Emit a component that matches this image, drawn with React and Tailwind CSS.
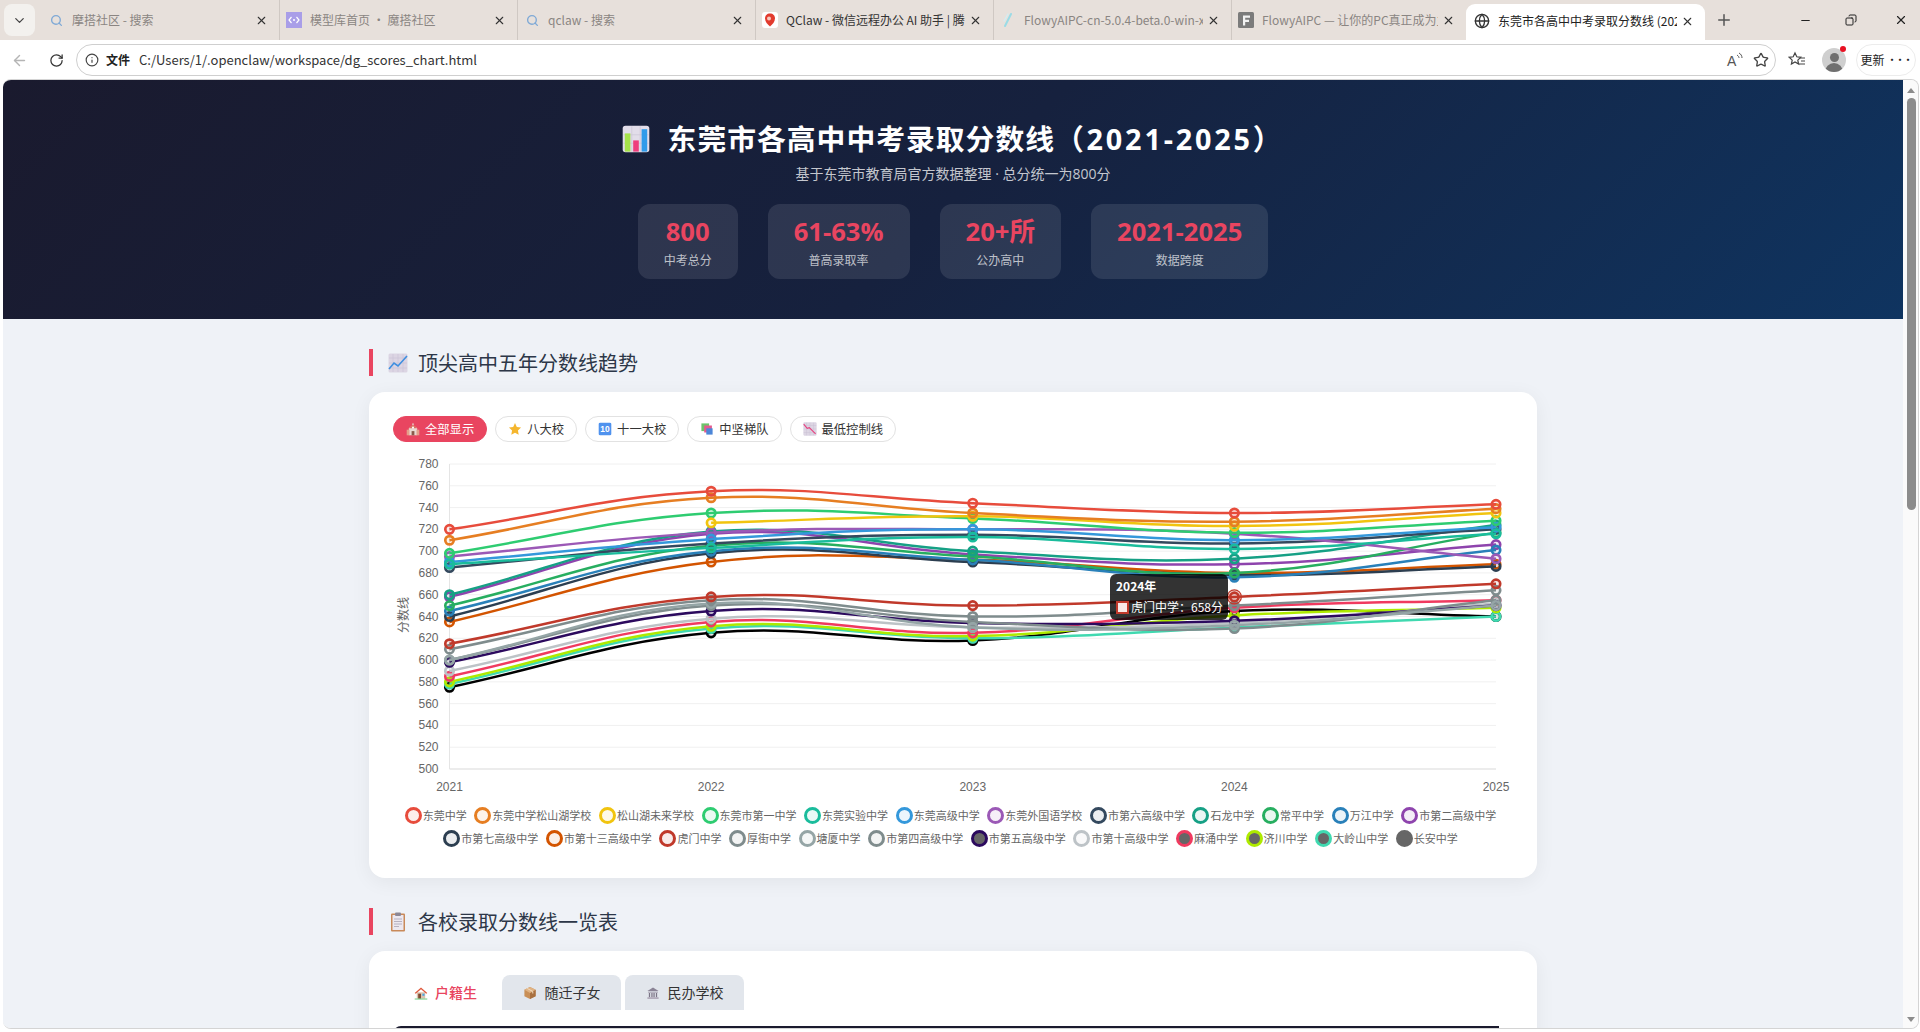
import React from "react";
import { ArrowLeft, ChevronDown, Copy, Globe, Info, Minus, Plus, RotateCw, Search, Star, X } from "lucide-react";

const CJK = "font-['Noto_Sans_CJK_SC','Noto_Sans',sans-serif]";
const LATIN_FIRST = "font-['Open_Sans','Noto_Sans_CJK_SC',sans-serif]";

const seriesList = [
  { name: "东莞中学", color: "#e74c3c", v: [720, 755, 744, 735, 743] },
  { name: "东莞中学松山湖学校", color: "#e67e22", v: [710, 749, 735, 727, 739] },
  { name: "松山湖未来学校", color: "#f1c40f", v: [null, 726, 732, 723, 735] },
  { name: "东莞市第一中学", color: "#2ecc71", v: [698, 735, 730, 717, 728] },
  { name: "东莞实验中学", color: "#1abc9c", v: [688, 703, 713, 702, 716] },
  { name: "东莞高级中学", color: "#3498db", v: [690, 711, 720, 710, 722] },
  { name: "东莞外国语学校", color: "#9b59b6", v: [695, 717, 720, 716, 693] },
  { name: "市第六高级中学", color: "#34495e", v: [685, 707, 715, 707, 720] },
  { name: "石龙中学", color: "#16a085", v: [660, 718, 700, 693, 724] },
  { name: "常平中学", color: "#27ae60", v: [650, 705, 695, 680, 717] },
  { name: "万江中学", color: "#2980b9", v: [645, 700, 692, 676, 701] },
  { name: "市第二高级中学", color: "#8e44ad", v: [658, 716, 697, 688, 706] },
  { name: "市第七高级中学", color: "#2c3e50", v: [640, 698, 690, 678, 686] },
  { name: "市第十三高级中学", color: "#d35400", v: [635, 690, 692, 680, 688] },
  { name: "虎门中学", color: "#c0392b", v: [615, 658, 650, 658, 670] },
  { name: "厚街中学", color: "#7f8c8d", v: [610, 655, 640, 650, 664] },
  { name: "塘厦中学", color: "#95a5a6", v: [600, 652, 630, 632, 650] },
  { name: "市第四高级中学", color: "#7f8c8d", v: [600, 650, 635, 629, 655] },
  { name: "市第五高级中学", color: "#2c0a5e", v: [598, 645, 634, 636, 650], legendFill: "#666666" },
  { name: "市第十高级中学", color: "#bdc3c7", v: [590, 638, 630, 634, 652] },
  { name: "麻涌中学", color: "#f03a5f", v: [585, 635, 625, 648, 655], legendFill: "#666666" },
  { name: "济川中学", color: "#aeea00", v: [580, 631, 622, 641, 648], legendFill: "#666666" },
  { name: "大岭山中学", color: "#40d9b0", v: [578, 629, 620, 630, 640], legendFill: "#666666" },
  { name: "长安中学", color: "#000000", v: [575, 625, 618, 645, 640], legendFill: "#666666", legendBorder: "#666666" },
];

// plot area, relative to the svg
const plot = { left: 56.5, right: 1103, top: 12, bottom: 317 };
const years = [2021, 2022, 2023, 2024, 2025];
const ticks = [780, 760, 740, 720, 700, 680, 660, 640, 620, 600, 580, 560, 540, 520, 500];
const xAt = (i) => plot.left + (i * (plot.right - plot.left)) / 4;
const yAt = (v) => plot.bottom - ((v - 500) / 280) * (plot.bottom - plot.top);

// same spline as chart.js with tension 0.4
function linePath(values) {
  const pts = values
    .map((v, i) => (v === null ? null : { x: xAt(i), y: yAt(v) }))
    .filter(Boolean);
  const t = 0.4;
  const ctrl = pts.map((p, i) => {
    const prev = pts[i - 1] || p;
    const next = pts[i + 1] || p;
    const d01 = Math.hypot(p.x - prev.x, p.y - prev.y);
    const d12 = Math.hypot(next.x - p.x, next.y - p.y);
    const total = d01 + d12 || 1;
    const fa = (t * d01) / total;
    const fb = (t * d12) / total;
    return {
      px: p.x - fa * (next.x - prev.x),
      py: p.y - fa * (next.y - prev.y),
      nx: p.x + fb * (next.x - prev.x),
      ny: p.y + fb * (next.y - prev.y),
    };
  });
  let d = `M${pts[0].x} ${pts[0].y}`;
  for (let i = 1; i < pts.length; i++) {
    d += `C${ctrl[i - 1].nx} ${ctrl[i - 1].ny} ${ctrl[i].px} ${ctrl[i].py} ${pts[i].x} ${pts[i].y}`;
  }
  return d;
}

const Emoji = ({ children, size = 16, className = "" }) => (
  <svg width={size} height={size} viewBox="0 0 20 20" className={`shrink-0 ${className}`}>
    {children}
  </svg>
);

const BarsEmoji = ({ size }) => (
  <Emoji size={size}>
    <rect x="0.5" y="0.5" width="19" height="19" rx="2" fill="#e2dde9" />
    <path d="M7 1v18M13 1v18M1 7h18M1 13h18" stroke="#cbc4d6" strokeWidth="0.5" />
    <rect x="2" y="6" width="4" height="13" fill="#a6e34a" />
    <rect x="8" y="11" width="4" height="8" fill="#ee3d7c" />
    <rect x="14" y="3" width="4" height="16" fill="#2f9bea" />
  </Emoji>
);

const LineUpEmoji = ({ size }) => (
  <Emoji size={size}>
    <rect x="0.5" y="0.5" width="19" height="19" rx="1.5" fill="#dcd5e3" />
    <path d="M5 1v18M10 1v18M15 1v18M1 5h18M1 10h18M1 15h18" stroke="#c5bcd0" strokeWidth="0.5" />
    <path d="M1 16L6 10l4 3 9-10" fill="none" stroke="#3f8fe0" strokeWidth="1.6" />
  </Emoji>
);

const LineDownEmoji = ({ size }) => (
  <Emoji size={size}>
    <rect x="0.5" y="0.5" width="19" height="19" rx="1.5" fill="#dcd5e3" />
    <path d="M5 1v18M10 1v18M15 1v18M1 5h18M1 10h18M1 15h18" stroke="#c5bcd0" strokeWidth="0.5" />
    <path d="M1 3l5 6 3-1 9 9" fill="none" stroke="#e8407e" strokeWidth="1.6" />
  </Emoji>
);

const ClipboardEmoji = ({ size }) => (
  <Emoji size={size}>
    <rect x="3" y="1.5" width="14" height="18" rx="1" fill="#c98a5a" />
    <rect x="4.5" y="3" width="11" height="15" fill="#ece8f0" />
    <path d="M6 7h8M6 9.5h8M6 12h8M6 14.5h5" stroke="#a9a3b5" strokeWidth="0.8" />
    <rect x="7" y="0.5" width="6" height="3.5" rx="1" fill="#8c8795" />
  </Emoji>
);

const SchoolEmoji = ({ size }) => (
  <Emoji size={size}>
    <path d="M10 1l1 2v2l5 4v10H4V9l5-4V3z" fill="#e9d9d2" />
    <path d="M4 9l6-5 6 5" fill="#d9705c" />
    <rect x="1" y="11" width="4" height="8" fill="#e59f8a" />
    <rect x="15" y="11" width="4" height="8" fill="#e59f8a" />
    <rect x="8" y="13" width="4" height="6" fill="#8a5a4a" />
    <circle cx="10" cy="8" r="1.5" fill="#fff" />
  </Emoji>
);

const StarEmoji = ({ size }) => (
  <Emoji size={size}>
    <path d="M10 1.5l2.6 5.6 6 .8-4.4 4.2 1.1 6L10 15.2l-5.3 2.9 1.1-6L1.4 7.9l6-.8z" fill="#f5b62e" />
  </Emoji>
);

const KeycapEmoji = ({ size }) => (
  <Emoji size={size}>
    <rect x="1" y="1" width="18" height="18" rx="2" fill="#4f92ee" />
    <text x="10" y="14.5" textAnchor="middle" fontSize="12" fontWeight="700" fill="#fff" fontFamily="Liberation Sans, sans-serif">10</text>
  </Emoji>
);

const BooksEmoji = ({ size }) => (
  <Emoji size={size}>
    <rect x="2" y="2" width="11" height="11" fill="#6cc36a" />
    <rect x="6" y="5" width="11" height="10" fill="#e35a8e" />
    <rect x="9" y="9" width="9" height="9" fill="#4c86d8" />
  </Emoji>
);

const HouseEmoji = ({ size }) => (
  <Emoji size={size}>
    <rect x="4" y="9" width="12" height="9" fill="#d9c3ae" />
    <path d="M1 10L10 2l9 8-1.5 1L10 4.5 2.5 11z" fill="#e0593c" />
    <rect x="6" y="11" width="4" height="7" fill="#7d4a32" />
    <rect x="12" y="11" width="3" height="3" fill="#45a7e6" />
    <rect x="1" y="18" width="18" height="1.2" fill="#53c26a" />
  </Emoji>
);

const BoxEmoji = ({ size }) => (
  <Emoji size={size}>
    <path d="M10 1.5l8 4v9l-8 4-8-4v-9z" fill="#c98f56" />
    <path d="M10 10v8.5l8-4v-9z" fill="#a87040" />
    <path d="M2 5.5l8 4.5 8-4.5-8-4z" fill="#e0b282" />
    <path d="M6 3.5l8 4.3v3" fill="none" stroke="#f1dcc0" strokeWidth="1.4" />
  </Emoji>
);

const BankEmoji = ({ size }) => (
  <Emoji size={size}>
    <path d="M10 2l8 5H2z" fill="#8b8496" />
    <rect x="3" y="8" width="14" height="1.5" fill="#a49dae" />
    <path d="M5 10v6M8.5 10v6M11.5 10v6M15 10v6" stroke="#7b7486" strokeWidth="1.8" />
    <rect x="2" y="16" width="16" height="2.5" fill="#b1aaba" />
  </Emoji>
);

const browserTabs = [
  { title: "摩搭社区 - 搜索", icon: <Search size={13} className="text-[#7fa9d6]" strokeWidth={2.5} /> },
  {
    title: "模型库首页 · 魔搭社区",
    icon: (
      <svg width="16" height="16" viewBox="0 0 16 16">
        <rect width="16" height="16" fill="#a99ee8" />
        <path d="M5.5 5L3 8l2.5 3M10.5 5L13 8l-2.5 3" fill="none" stroke="#fff" strokeWidth="1.2" />
        <circle cx="8" cy="8" r="1" fill="#fff" />
      </svg>
    ),
  },
  { title: "qclaw - 搜索", icon: <Search size={13} className="text-[#7fa9d6]" strokeWidth={2.5} /> },
  {
    title: "QClaw - 微信远程办公 AI 助手 | 腾讯",
    dark: true,
    icon: (
      <svg width="16" height="16" viewBox="0 0 16 16">
        <rect width="16" height="16" rx="3" fill="#fff" />
        <path d="M8 1.5c3 0 5 2 5 5 0 3-2.5 6-5 8-2.5-2-5-5-5-8 0-3 2-5 5-5z" fill="#e23b2e" />
        <circle cx="7" cy="6.5" r="2" fill="#f7c9bf" />
      </svg>
    ),
  },
  {
    title: "FlowyAIPC-cn-5.0.4-beta.0-win-x64",
    icon: (
      <svg width="16" height="16" viewBox="0 0 16 16">
        <path d="M5 14L11 2" stroke="#9adbe6" strokeWidth="2" strokeLinecap="round" />
        <path d="M4 9L8 2" stroke="#d2eef3" strokeWidth="1.2" strokeLinecap="round" />
      </svg>
    ),
  },
  {
    title: "FlowyAIPC — 让你的PC真正成为主",
    icon: (
      <svg width="16" height="16" viewBox="0 0 16 16">
        <rect width="16" height="16" rx="1.5" fill="#7b7b7b" />
        <path d="M5 3.5h7v2.2H7.2v2H11v2.2H7.2v3.6H5z" fill="#f2f2f2" />
      </svg>
    ),
  },
];

const stats = [
  { value: "800", label: "中考总分" },
  { value: "61-63%", label: "普高录取率" },
  { value: "20+所", label: "公办高中" },
  { value: "2021-2025", label: "数据跨度" },
];

const filters = [
  { label: "全部显示", Icon: SchoolEmoji, active: true },
  { label: "八大校", Icon: StarEmoji },
  { label: "十一大校", Icon: KeycapEmoji },
  { label: "中坚梯队", Icon: BooksEmoji },
  { label: "最低控制线", Icon: LineDownEmoji },
];

const SectionTitle = ({ Icon, children }) => (
  <div className="mb-4 flex h-[27px] items-center border-l-4 border-[#e94560] pl-[15px] text-[20px] leading-[27px] text-[#2d3748]">
    <Icon size={20} />
    <span className="ml-[10px]">{children}</span>
  </div>
);

const Chart = () => (
  <div className="relative mt-[10px]">
    <svg width="1120" height="350" className="block">
      {ticks.map((t) => (
        <line key={t} x1={plot.left} x2={plot.right} y1={yAt(t)} y2={yAt(t)} stroke={t === 500 ? "#d9d9d9" : "#f0f0f0"} strokeWidth="1" />
      ))}
      <line x1={plot.left} x2={plot.left} y1={plot.top} y2={plot.bottom} stroke="#e5e5e5" strokeWidth="1" />
      {ticks.map((t) => (
        <text key={t} x={plot.left - 11} y={yAt(t) + 4} textAnchor="end" fontSize="12" fill="#666" fontFamily="Liberation Sans, sans-serif">
          {t}
        </text>
      ))}
      {years.map((y, i) => (
        <text key={y} x={xAt(i)} y="339" textAnchor="middle" fontSize="12" fill="#666" fontFamily="Liberation Sans, sans-serif">
          {y}
        </text>
      ))}
      <text
        transform="translate(15 163) rotate(-90)"
        textAnchor="middle"
        fontSize="12"
        fill="#666"
        fontFamily="Noto Sans CJK SC, sans-serif"
      >
        分数线
      </text>
      {[...seriesList].reverse().map((s) => (
        <g key={s.name}>
          <path d={linePath(s.v)} fill="none" stroke={s.color} strokeWidth="2.5" />
          {s.v.map((v, i) =>
            v === null ? null : (
              <circle key={i} cx={xAt(i)} cy={yAt(v)} r="4.2" fill={`${s.color}18`} stroke={s.color} strokeWidth="2.7" />
            )
          )}
        </g>
      ))}
      <circle cx={xAt(3)} cy={yAt(658)} r="7" fill="#c0392b30" stroke="#c0392b" strokeWidth="1.2" />
    </svg>
    <div className="absolute left-[717px] top-[122px] h-[46px] w-[118px] rounded-[6px] bg-black/80 pl-[6px] pt-[3px] text-[12px] leading-[18px] text-white">
      <div className="font-bold">2024年</div>
      <div className="mt-[3px] flex items-center">
        <span className="mr-[2px] h-[13px] w-[13px] border-2 border-[#c0392b] bg-[#f9e9e7]" />
        虎门中学：658分
      </div>
    </div>
  </div>
);

const LegendRow = ({ items }) => (
  <div className="flex h-[23px] items-center justify-center gap-[7.6px] pr-[5px] text-[11px] text-[#666666]">
    {items.map((s) => (
      <div key={s.name} className="flex items-center">
        <span
          className="h-[17px] w-[17px] rounded-full border-[3px]"
          style={{
            borderColor: s.legendBorder || s.color,
            backgroundColor: s.legendFill || `${s.color}18`,
          }}
        />
        <span className="ml-[1px] whitespace-nowrap">{s.name}</span>
      </div>
    ))}
  </div>
);

export default function App() {
  return (
    <div className={`flex h-screen w-full flex-col overflow-hidden bg-white ${CJK}`}>
      {/* tab strip */}
      <div className="flex h-10 shrink-0 items-end bg-[#e7e0db]">
        <div className="mb-1 ml-1 mr-[7px] flex h-8 w-[31px] items-center justify-center rounded-lg bg-[#f3f1ee]">
          <ChevronDown size={15} className="text-[#444]" />
        </div>
        <div className="flex h-full">
          {browserTabs.map((tab, i) => (
            <div key={i} className={`flex h-full items-center border-r border-[#cfc8c3] pl-[6px] pr-[11px] ${i === 5 ? "w-[234px] border-r-0" : "w-[238px]"}`}>
              <span className="flex w-4 shrink-0 items-center justify-center">{tab.icon}</span>
              <span className={`ml-2 flex-1 overflow-hidden whitespace-nowrap text-[12px] ${tab.dark ? "text-[#333]" : "text-[#8a8582]"}`}>
                {tab.title}
              </span>
              <X size={13} className="ml-1 shrink-0 text-[#333]" />
            </div>
          ))}
        </div>
        <div className="flex h-9 w-[239px] items-center rounded-t-[9px] bg-white pb-[2px] pl-2 pr-[11px]">
          <Globe size={16} className="shrink-0 text-[#333]" />
          <span className="ml-2 flex-1 overflow-hidden whitespace-nowrap text-[12px] text-[#222]">东莞市各高中中考录取分数线 (2021-2025)</span>
          <X size={13} className="ml-1 shrink-0 text-[#333]" />
        </div>
        <div className="flex h-full flex-1 items-center">
          <Plus size={18} className="ml-[10px] text-[#555]" />
          <div className="ml-auto flex items-center">
            <Minus size={13} className="mr-[33px] text-[#222]" />
            <Copy size={12} className="mr-[37px] -scale-x-100 text-[#222]" />
            <X size={14} className="mr-[12px] text-[#222]" />
          </div>
        </div>
      </div>

      {/* toolbar */}
      <div className="flex h-10 shrink-0 items-center">
        <ArrowLeft size={17} className="ml-[11px] text-[#b5b5b5]" />
        <RotateCw size={15} className="ml-[21px] text-[#333]" />
        <div className="ml-[12px] flex h-8 w-[1700px] items-center rounded-full border border-[#cfcfcf] pl-[8px] pr-[6px]">
          <Info size={14} className="text-[#444]" />
          <span className="ml-[7px] text-[12px] font-bold text-[#222]">文件</span>
          <span className="ml-[9px] text-[13px] text-[#333]">C:/Users/1/.openclaw/workspace/dg_scores_chart.html</span>
          <div className="ml-auto flex items-center">
            <svg width="18" height="16" viewBox="0 0 18 16" className="mr-[9px]">
              <text x="1" y="14" fontSize="14" fill="#555" fontFamily="Liberation Sans, sans-serif">A</text>
              <path d="M11 3c1.5 1 2 2 2 3M13 1c2 1 3 3 3 5" fill="none" stroke="#555" strokeWidth="1" />
            </svg>
            <Star size={16} className="text-[#444]" />
          </div>
        </div>
        <svg width="18" height="18" viewBox="0 0 18 18" className="ml-[12px]">
          <path d="M7 2l1.8 3.8 4 .5-3 2.8.8 4L7 11l-3.6 2.1.8-4-3-2.8 4-.5z" fill="none" stroke="#444" strokeWidth="1.2" />
          <path d="M12 7h5M13 10h4M11 13h6" stroke="#444" strokeWidth="1.2" />
        </svg>
        <div className="relative ml-[16px]">
          <div className="flex h-[24px] w-[24px] flex-col items-center justify-end overflow-hidden rounded-full bg-[#cfcfcf]">
            <span className="h-[9px] w-[9px] rounded-full bg-[#6f6f6f]" />
            <span className="mt-[1px] h-[9px] w-[18px] rounded-t-full bg-[#6f6f6f]" />
          </div>
          <span className="absolute right-0 top-[-2px] h-[6px] w-[6px] rounded-full bg-[#e81123]" />
        </div>
        <div className="ml-[10px] flex h-8 w-[60px] items-center justify-center whitespace-nowrap rounded-full border border-[#ececec] text-[12px] text-[#222]">
          更新<span className="ml-[3px] text-[9px] font-bold tracking-[-1px]">···</span>
        </div>
      </div>

      {/* page */}
      <div className="mb-[3px] ml-[3px] mr-[1px] -mt-px flex min-h-0 flex-1 overflow-hidden rounded-lg border border-[#d4d4d4] border-l-0 bg-[#fafafa]">
        <div className="min-w-0 flex-1 overflow-hidden bg-[#eff2f7]">
          <header className="flex h-[239px] flex-col items-center bg-[linear-gradient(135deg,#1a1a2e_0%,#16213e_50%,#0f3460_100%)] pt-[38px] text-white">
            <h1 className="flex items-center text-[28.8px] font-bold leading-[40px] tracking-[1px]">
              <BarsEmoji size={28} />
              <span className="ml-[18px]">
                东莞市各高中中考录取分数线<span className={`${LATIN_FIRST} tracking-[2.8px]`}>（2021-2025）</span>
              </span>
            </h1>
            <p className={`mt-[4px] text-[14px] leading-[22px] text-white/75 ${LATIN_FIRST}`}>基于东莞市教育局官方数据整理 · 总分统一为800分</p>
            <div className="mt-[19px] flex gap-[30px]">
              {stats.map((s) => (
                <div key={s.label} className="flex h-[75px] flex-col items-center rounded-xl bg-white/10 px-[26px] pt-[11px]">
                  <div className={`whitespace-nowrap text-[25.6px] font-bold leading-[34px] text-[#e94560] ${LATIN_FIRST}`}>{s.value}</div>
                  <div className="mt-[2px] text-[12px] leading-[18px] text-white/70">{s.label}</div>
                </div>
              ))}
            </div>
          </header>

          <main className="mx-auto max-w-[1200px] px-4 pt-[30px]">
            <SectionTitle Icon={LineUpEmoji}>顶尖高中五年分数线趋势</SectionTitle>
            <section className="mb-[30px] h-[486px] rounded-2xl bg-white p-6 shadow-[0_4px_20px_rgba(0,0,0,0.06)]">
              <div className="flex gap-2">
                {filters.map(({ label, Icon, active }) => (
                  <button
                    key={label}
                    className={`flex h-[26px] items-center gap-[5px] rounded-full border px-[12px] text-[12.3px] ${
                      active ? "border-[#e94560] bg-[#e94560] text-white" : "border-[#e2e2e2] bg-white text-[#333]"
                    }`}
                  >
                    <Icon size={14} />
                    {label}
                  </button>
                ))}
              </div>
              <Chart />
              <div className="mt-[2px]">
                <LegendRow items={seriesList.slice(0, 12)} />
                <LegendRow items={seriesList.slice(12)} />
              </div>
            </section>

            <SectionTitle Icon={ClipboardEmoji}>各校录取分数线一览表</SectionTitle>
            <section className="rounded-2xl bg-white p-6 shadow-[0_4px_20px_rgba(0,0,0,0.06)]">
              <div className="flex h-[35px] gap-1 text-[14px] text-[#333]">
                <div className="flex w-[105px] items-center justify-center gap-[7px] font-medium text-[#e94560]">
                  <HouseEmoji size={14} />
                  户籍生
                </div>
                <div className="flex w-[119px] items-center justify-center gap-[8px] rounded-t-lg bg-[#e2e6ec]">
                  <BoxEmoji size={14} />
                  随迁子女
                </div>
                <div className="flex w-[119px] items-center justify-center gap-[8px] rounded-t-lg bg-[#e2e6ec]">
                  <BankEmoji size={14} />
                  民办学校
                </div>
              </div>
              <div className="mt-4 h-10 w-[1106px] rounded-tl-lg bg-[#1a1a2e]" />
            </section>
          </main>
        </div>

        {/* scrollbar */}
        <div className="flex w-[15px] shrink-0 flex-col items-center bg-[#fafafa]">
          <div className="ml-[1px] mt-[8px] h-0 w-0 border-x-[4px] border-b-[5px] border-x-transparent border-b-[#8c8c8c]" />
          <div className="ml-[1px] mt-[5px] h-[412px] w-[9px] rounded-full bg-[#8c8c8c]" />
          <div className="mb-[6px] ml-[1px] mt-auto h-0 w-0 border-x-[4px] border-t-[5px] border-x-transparent border-t-[#8c8c8c]" />
        </div>
      </div>
    </div>
  );
}
